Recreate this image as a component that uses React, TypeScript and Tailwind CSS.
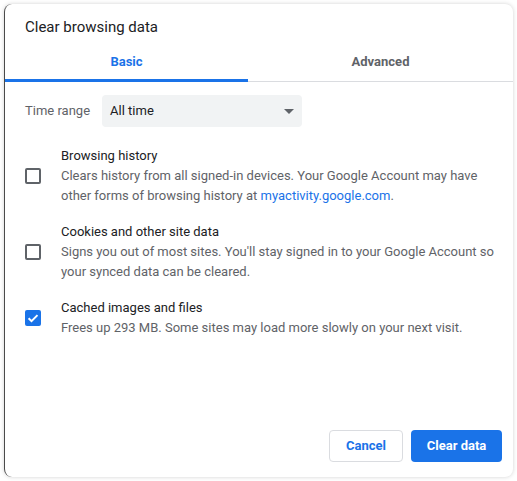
import { useState } from "react"

const font = { fontFamily: "Roboto, 'Liberation Sans', sans-serif" }

function Checkbox({ checked, onClick }: { checked: boolean; onClick: () => void }) {
  return (
    <button
      onClick={onClick}
      className={
        checked
          ? "flex h-4 w-4 shrink-0 items-center justify-center rounded-[2px] bg-[#1a73e8]"
          : "h-4 w-4 shrink-0 rounded-[2px] border-2 border-[#5f6368] bg-white"
      }
    >
      {checked && (
        <svg viewBox="0 0 16 16" className="h-4 w-4">
          <path d="M3.6 8.3l2.9 2.9 6-6.1" fill="none" stroke="#fff" strokeWidth="2" />
        </svg>
      )}
    </button>
  )
}

interface Item {
  title: string
  lines: React.ReactNode[]
}

const items: Item[] = [
  {
    title: "Browsing history",
    lines: [
      "Clears history from all signed-in devices. Your Google Account may have",
      <>
        other forms of browsing history at <span className="text-[#1a73e8]">myactivity.google.com</span>.
      </>,
    ],
  },
  {
    title: "Cookies and other site data",
    lines: [
      "Signs you out of most sites. You'll stay signed in to your Google Account so",
      "your synced data can be cleared.",
    ],
  },
  {
    title: "Cached images and files",
    lines: ["Frees up 293 MB. Some sites may load more slowly on your next visit."],
  },
]

export default function App() {
  const [tab, setTab] = useState(0)
  const [checked, setChecked] = useState([false, false, true])

  return (
    <div className="h-[481px] w-[517px] bg-white p-1" style={font}>
      <div className="flex h-[473px] w-[509px] flex-col rounded-lg border-l border-l-[#4a4a4a] bg-white shadow-[0_0_4px_rgba(0,0,0,0.18)]">
        <div className="pl-5 pt-[13px] text-[15px] leading-5 text-[#202124]">Clear browsing data</div>

        <div className="mt-2 flex h-[37px] border-b border-[#dadce0] text-[13px] font-bold">
          <button
            onClick={() => setTab(0)}
            className={
              tab === 0
                ? "-mb-px flex w-[243px] items-center justify-center border-b-[3px] border-[#1a73e8] text-[#1a73e8]"
                : "flex w-[243px] items-center justify-center pb-[3px] text-[#5f6368]"
            }
          >
            Basic
          </button>
          <button
            onClick={() => setTab(1)}
            className={
              tab === 1
                ? "-mb-px flex flex-1 items-center justify-center border-b-[3px] border-[#1a73e8] text-[#1a73e8]"
                : "flex flex-1 items-center justify-center pb-[3px] text-[#5f6368]"
            }
          >
            Advanced
          </button>
        </div>

        <div className="mt-[13px] flex items-center gap-3 pl-5 text-[13px]">
          <span className="text-[#5f6368]">Time range</span>
          <div className="flex h-8 w-[200px] items-center justify-between rounded bg-[#f1f3f4] pl-2 pr-[8px] text-[#202124]">
            <span>All time</span>
            <svg viewBox="0 0 10 5" className="h-[5px] w-[10px]">
              <path d="M0 0h10L5 5z" fill="#5f6368" />
            </svg>
          </div>
        </div>

        <div className="mt-[19px] flex flex-col gap-4 pl-5 text-[13px] leading-5">
          {items.map((item, i) => (
            <div key={i} className="flex items-center gap-5">
              <Checkbox
                checked={checked[i]}
                onClick={() => setChecked(checked.map((c, j) => (j === i ? !c : c)))}
              />
              <div className="flex flex-col whitespace-nowrap">
                <span className="text-[#202124]">{item.title}</span>
                {item.lines.map((line, k) => (
                  <span key={k} className="text-[#5f6368]">
                    {line}
                  </span>
                ))}
              </div>
            </div>
          ))}
        </div>

        <div className="mt-auto flex justify-end gap-2 pb-[15px] pr-[11px] text-[13px] font-bold">
          <button className="h-8 w-[74px] rounded border border-[#dadce0] bg-white text-[#1a73e8]">Cancel</button>
          <button className="h-8 w-[91px] rounded bg-[#1a73e8] text-white">Clear data</button>
        </div>
      </div>
    </div>
  )
}
